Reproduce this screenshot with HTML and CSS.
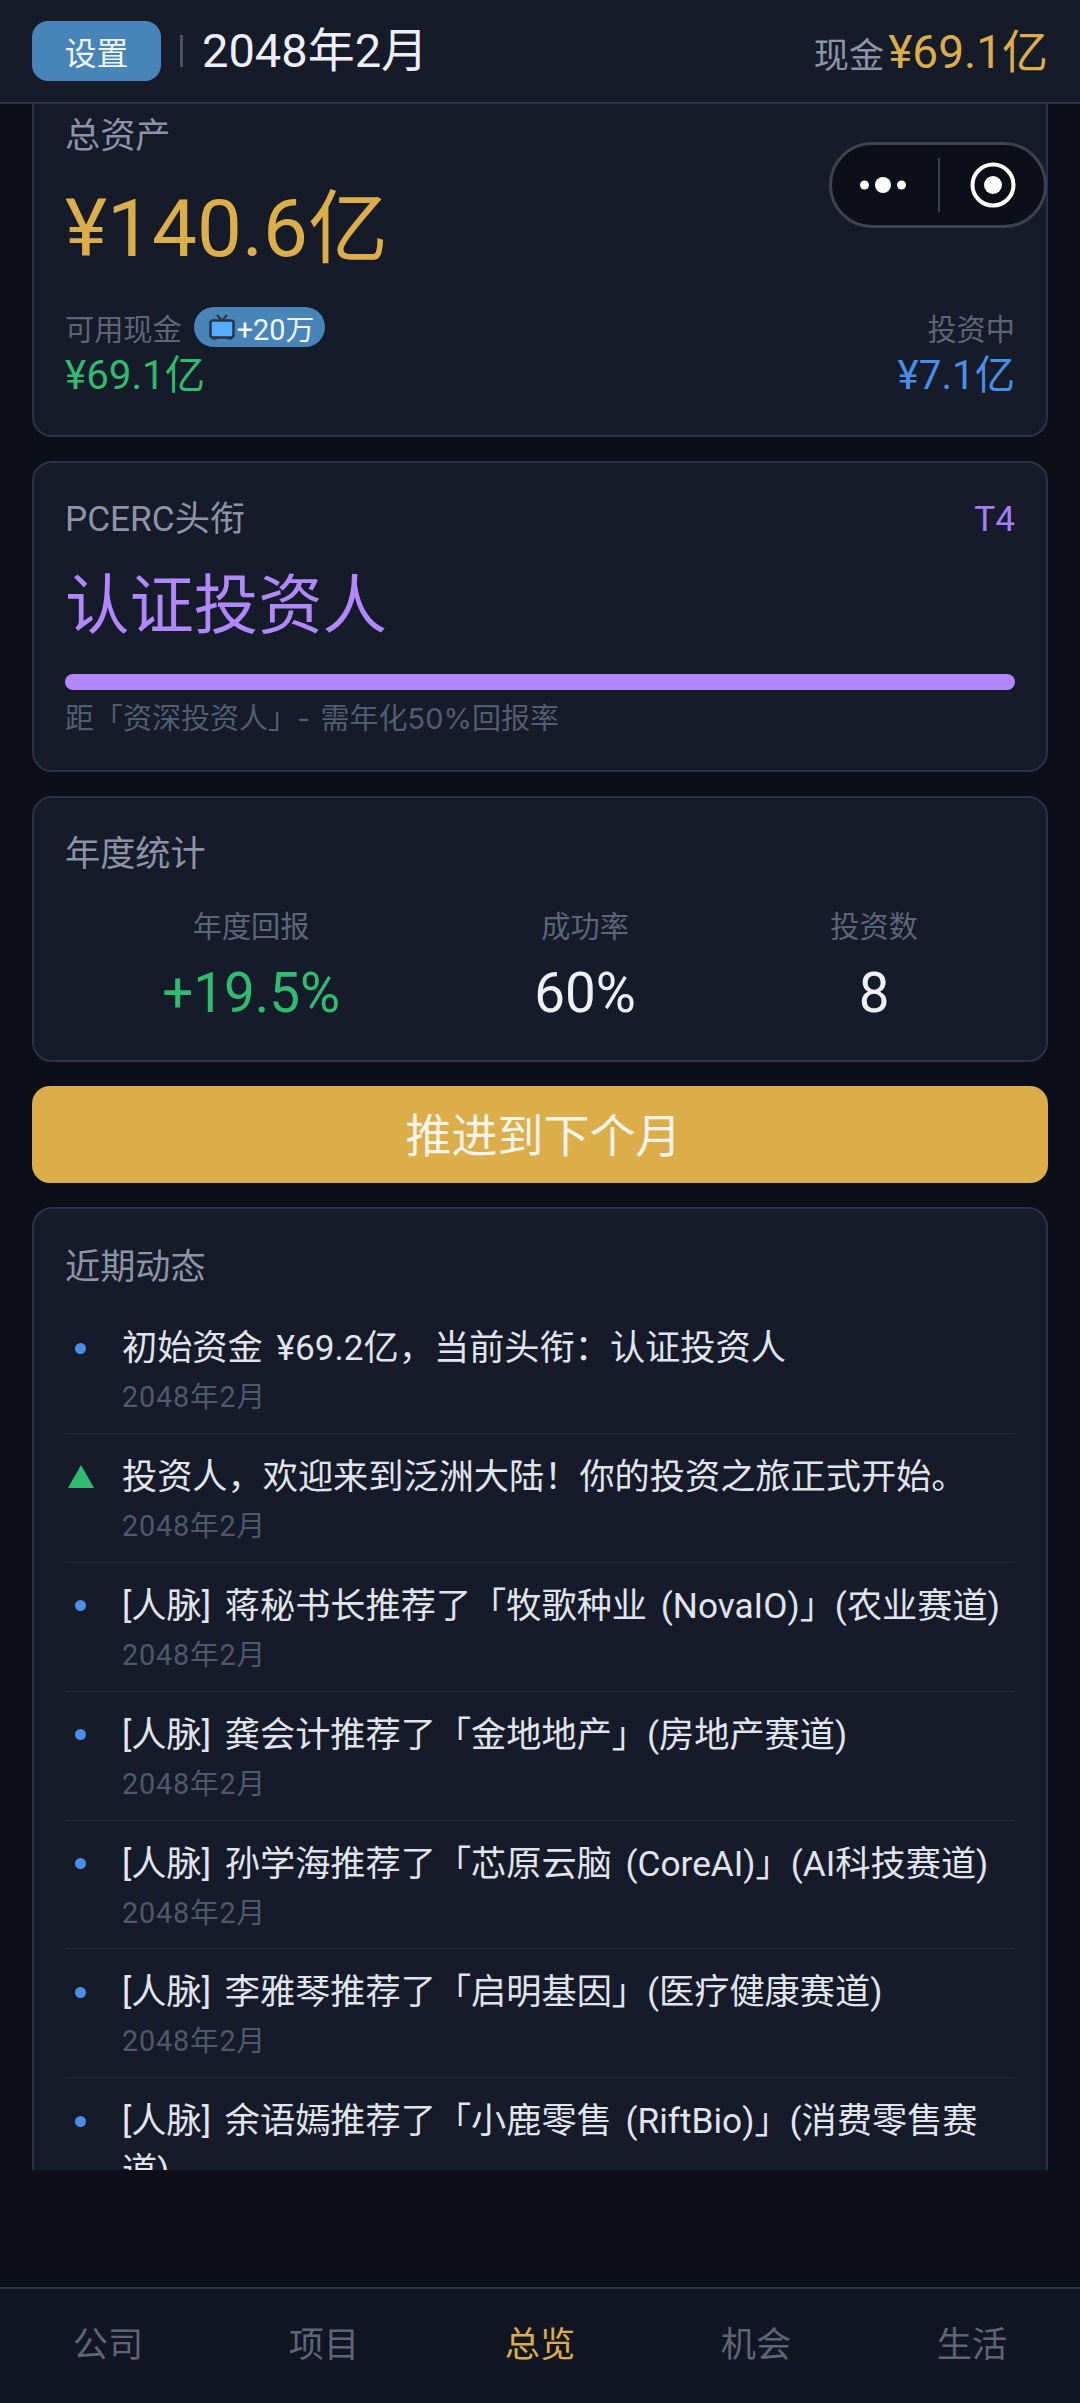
FILE: index.html
```html
<!DOCTYPE html>
<html lang="zh-CN">
<head>
<meta charset="utf-8">
<title>总览</title>
<link rel="stylesheet" href="styles.css">
</head>
<body>
<div class="app">
  <header class="topbar">
    <button class="settings">设置</button>
    <span class="sep"></span>
    <span class="date">2048年2月</span>
    <span class="cash"><span class="cash-label">现金</span> <span class="cash-value">¥69.1亿</span></span>
  </header>
  <main class="scroller">
    <div class="scroll-inner">
      <section class="card assets">
        <div class="muted-title">总资产</div>
        <div class="total">¥140.6亿</div>
        <div class="assets-row">
          <div>
            <div class="label-line"><span class="small-label">可用现金</span>
              <span class="ad-pill">
                <svg class="tv" viewBox="0 0 26 26"><path d="M8 1l5 6 5-6" fill="none" stroke="#2a3442" stroke-width="2"/><rect x="1.5" y="6.5" width="23" height="17" rx="2.5" fill="#54aeff" stroke="#2a3442" stroke-width="2.5"/><rect x="3" y="23" width="5" height="2.5" fill="#2a3442"/><rect x="18" y="23" width="5" height="2.5" fill="#2a3442"/></svg>+20万</span>
            </div>
            <div class="sub-value green">¥69.1亿</div>
          </div>
          <div class="right">
            <div class="label-line end"><span class="small-label">投资中</span></div>
            <div class="sub-value blue">¥7.1亿</div>
          </div>
        </div>
      </section>
      <section class="card rank">
        <div class="rank-head"><span class="muted-title">PCERC头衔</span><span class="tier">T4</span></div>
        <div class="rank-name">认证投资人</div>
        <div class="bar"></div>
        <div class="rank-hint">距「资深投资人」- 需年化50%回报率</div>
      </section>
      <section class="card stats">
        <div class="muted-title">年度统计</div>
        <div class="stat-grid">
          <div class="stat"><div class="stat-label">年度回报</div><div class="stat-value up">+19.5%</div></div>
          <div class="stat"><div class="stat-label">成功率</div><div class="stat-value">60%</div></div>
          <div class="stat"><div class="stat-label">投资数</div><div class="stat-value">8</div></div>
        </div>
      </section>
      <button class="advance">推进到下个月</button>
      <section class="card feed">
        <div class="muted-title">近期动态</div>
        <ul class="feed-list">
          <li class="item"><span class="mark"><i class="dot"></i></span><div><div class="item-text">初始资金 ¥69.2亿，当前头衔：认证投资人</div><div class="item-date">2048年2月</div></div></li>
          <li class="item"><span class="mark"><i class="tri"></i></span><div><div class="item-text">投资人，欢迎来到泛洲大陆！你的投资之旅正式开始。</div><div class="item-date">2048年2月</div></div></li>
          <li class="item"><span class="mark"><i class="dot"></i></span><div><div class="item-text">[人脉] 蒋秘书长推荐了「牧歌种业 (NovaIO)」(农业赛道)</div><div class="item-date">2048年2月</div></div></li>
          <li class="item"><span class="mark"><i class="dot"></i></span><div><div class="item-text">[人脉] 龚会计推荐了「金地地产」(房地产赛道)</div><div class="item-date">2048年2月</div></div></li>
          <li class="item"><span class="mark"><i class="dot"></i></span><div><div class="item-text">[人脉] 孙学海推荐了「芯原云脑 (CoreAI)」(AI科技赛道)</div><div class="item-date">2048年2月</div></div></li>
          <li class="item"><span class="mark"><i class="dot"></i></span><div><div class="item-text">[人脉] 李雅琴推荐了「启明基因」(医疗健康赛道)</div><div class="item-date">2048年2月</div></div></li>
          <li class="item"><span class="mark"><i class="dot"></i></span><div><div class="item-text">[人脉] 余语嫣推荐了「小鹿零售 (RiftBio)」(消费零售赛道)</div><div class="item-date">2048年2月</div></div></li>
        </ul>
      </section>
    </div>
  </main>
  <div class="spacer"></div>
  <nav class="tabs">
    <span class="tab">公司</span><span class="tab">项目</span><span class="tab active">总览</span><span class="tab">机会</span><span class="tab">生活</span>
  </nav>
  <div class="capsule">
    <svg class="cap-dots" viewBox="0 0 46 16"><circle cx="4.5" cy="8" r="4.5" fill="#fff"/><circle cx="23" cy="8" r="8" fill="#fff"/><circle cx="41.5" cy="8" r="4.5" fill="#fff"/></svg>
    <span class="cap-sep"></span>
    <svg class="cap-rec" viewBox="0 0 46 46"><circle cx="23" cy="23" r="20.5" fill="none" stroke="#fff" stroke-width="4"/><circle cx="23" cy="23" r="9" fill="#fff"/></svg>
  </div>
</div>
</body>
</html>
```
FILE: styles.css
```css
* { box-sizing: border-box; margin: 0; padding: 0; }
html, body { width: 1080px; height: 2403px; background: #0c0f19; overflow: hidden; }
body { font-family: Roboto, "Noto Sans CJK SC", sans-serif; font-weight: 400; color: #e8ebf4; }
.app { position: relative; width: 1080px; height: 2403px; display: flex; flex-direction: column; }
.topbar { height: 104px; flex: none; display: flex; align-items: center; padding: 0 32px 1px; background: #151b29; border-bottom: 2px solid #2a3245; position: relative; z-index: 2; }
.settings { width: 129px; height: 60px; border: 0; border-radius: 16px; background: #4784b8; color: #f2f5fa; font: 400 31.68px "Noto Sans CJK SC", sans-serif; }
.sep { width: 3px; height: 32px; margin: 0 19px; background: #4a5366; }
.date { font-size: 47px; line-height: 1; color: #eceef8; }
.cash { margin-left: auto; margin-top: -5px; white-space: nowrap; }
.cash-label { font-size: 35.2px; color: #8c94a6; }
.cash-value { font-size: 46px; color: #dcae4a; }
.scroller { height: 2066px; flex: none; padding: 0 32px; overflow: hidden; }
.scroll-inner { display: flex; flex-direction: column; gap: 24px; margin-top: -40px; }
.spacer { flex: 1; }
.card { background: #151b29; border: 2px solid #2a3245; border-radius: 20px; padding: 0 31px; }
.muted-title { font-size: 35.2px; line-height: 46px; color: #8c94a6; }
.assets { height: 373px; padding-top: 47px; }
.total { font-size: 80px; line-height: 100px; margin-top: 20px; color: #dcae4a; }
.assets-row { display: flex; justify-content: space-between; margin-top: 27px; }
.label-line { display: flex; align-items: center; gap: 12px; height: 42px; }
.end { justify-content: flex-end; }
.right { text-align: right; }
.small-label { font-size: 29.2px; color: #5d6677; }
.ad-pill { display: inline-flex; align-items: center; height: 40px; padding: 0 11px 0 15px; border-radius: 20px; background: #4784b8; color: #f2f5fa; font-size: 28.8px; }
.tv { width: 26px; height: 26px; margin-right: 2px; }
.sub-value { font-size: 40.32px; line-height: 50px; margin-top: 3px; }
.green { color: #2fbb70; }
.blue { color: #4a8fe7; }
.rank { height: 311px; padding-top: 33px; }
.rank-head { display: flex; justify-content: space-between; align-items: center; }
.tier { font-size: 35.2px; color: #a67ef5; }
.rank-name { font-size: 64.4px; line-height: 90px; margin-top: 19px; color: #b088fb; }
.bar { height: 16px; margin-top: 23px; border-radius: 8px; background: #b388ff; }
.rank-hint { font-family: Inter, "Noto Sans CJK SC", sans-serif; font-size: 29px; line-height: 40px; margin-top: 9px; word-spacing: 2px; color: #535d70; }
.stats { height: 266px; padding-top: 33px; }
.stat-grid { display: flex; justify-content: space-around; margin-top: 29px; }
.stat { text-align: center; }
.stat-label { font-size: 29.2px; line-height: 42px; color: #5d6677; }
.stat-value { font-size: 54.72px; line-height: 70px; margin-top: 10px; color: #eef0f8; }
.stat-value.up { color: #2fbb70; }
.advance { height: 97px; flex: none; border: 0; border-radius: 18px; padding: 0 0 6px 7px; background: #dcae4a; color: #f6f3ea; font: 400 46px "Noto Sans CJK SC", sans-serif; }
.feed { padding-top: 35px; flex: 1; }
.feed-list { list-style: none; margin-top: 15px; }
.item { display: flex; padding: 18px 0 10.9px; border-bottom: 1px solid #232a3b; }
.mark { width: 57px; flex: none; height: 50px; display: flex; align-items: center; padding-left: 3px; }
.dot { width: 11px; height: 11px; margin-left: 7px; border-radius: 50%; background: #4a8fe7; }
.tri { width: 0; height: 0; border-left: 13px solid transparent; border-right: 13px solid transparent; border-bottom: 23px solid #2fbb70; }
.item-text { font-size: 35.2px; line-height: 50px; word-spacing: 5px; color: #e0e4ed; }
.item-date { font-size: 28.8px; line-height: 49px; letter-spacing: 0.8px; color: #4f596b; }
.tabs { height: 116px; flex: none; display: grid; grid-template-columns: repeat(5, 1fr); padding-top: 33px; background: #111622; border-top: 2px solid #2a3245; text-align: center; }
.tab { font-size: 35.2px; line-height: 46px; color: #5d6677; }
.tab.active { color: #dcae4a; }
.capsule { position: absolute; left: 829px; top: 142px; width: 218px; height: 86px; display: flex; align-items: center; border: 3px solid #3d424f; border-radius: 43px; background: #0c0f17; z-index: 3; }
.cap-dots { width: 46px; height: 16px; margin-left: 28px; flex: none; }
.cap-sep { width: 2px; height: 54px; margin-left: 32px; background: #3d424f; }
.cap-rec { width: 46px; height: 46px; margin-left: 30px; }
```
